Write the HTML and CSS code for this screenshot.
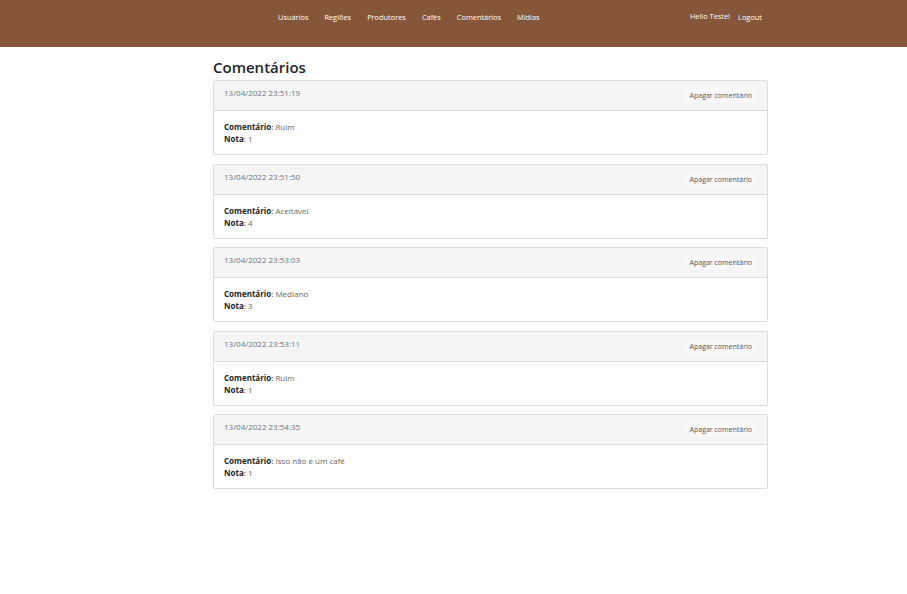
FILE: index.html
```html
<!DOCTYPE html>
<html lang="pt-BR">
<head>
<meta charset="utf-8">
<title>Comentários</title>
<link rel="stylesheet" href="styles.css">
</head>
<body>
<header class="topbar">
  <div class="topbar-inner">
    <nav class="nav-links">
      <a href="#">Usuários</a>
      <a href="#">Regiões</a>
      <a href="#">Produtores</a>
      <a href="#">Cafés</a>
      <a href="#">Comentários</a>
      <a href="#">Mídias</a>
    </nav>
    <div class="user-area">
      <span class="hello">Hello Teste!</span>
      <a href="#" class="logout">Logout</a>
    </div>
  </div>
</header>
<main class="container">
  <h2 class="page-title">Comentários</h2>

  <div class="card">
    <div class="card-header"><span class="date">13/04/2022 23:51:19</span><button class="btn-del">Apagar comentário</button></div>
    <div class="card-body"><div><b>Comentário</b>: <span class="val">Ruim</span></div><div><b>Nota</b>: <span class="val">1</span></div></div>
  </div>

  <div class="card">
    <div class="card-header"><span class="date">13/04/2022 23:51:50</span><button class="btn-del">Apagar comentário</button></div>
    <div class="card-body"><div><b>Comentário</b>: <span class="val">Aceitável</span></div><div><b>Nota</b>: <span class="val">4</span></div></div>
  </div>

  <div class="card">
    <div class="card-header"><span class="date">13/04/2022 23:53:03</span><button class="btn-del">Apagar comentário</button></div>
    <div class="card-body"><div><b>Comentário</b>: <span class="val">Mediano</span></div><div><b>Nota</b>: <span class="val">3</span></div></div>
  </div>

  <div class="card">
    <div class="card-header"><span class="date">13/04/2022 23:53:11</span><button class="btn-del">Apagar comentário</button></div>
    <div class="card-body"><div><b>Comentário</b>: <span class="val">Ruim</span></div><div><b>Nota</b>: <span class="val">1</span></div></div>
  </div>

  <div class="card">
    <div class="card-header"><span class="date">13/04/2022 23:54:35</span><button class="btn-del">Apagar comentário</button></div>
    <div class="card-body"><div><b>Comentário</b>: <span class="val">Isso não é um café</span></div><div><b>Nota</b>: <span class="val">1</span></div></div>
  </div>
</main>
</body>
</html>
```

FILE: styles.css
```css
* { box-sizing: border-box; }
html, body { margin: 0; padding: 0; background: #fff; }
body {
  font-family: "Open Sans", "Noto Sans", sans-serif;
  font-size: 8px;
  line-height: 12px;
  color: #212529;
}
.topbar {
  background: #85563a;
  height: 47px;
}
.topbar-inner {
  width: 555px;
  margin-left: 213px;
  display: flex;
  justify-content: space-between;
  padding: 11px 6px 0 65px;
}
.nav-links { display: flex; gap: 16px; }
.nav-links a, .logout, .hello {
  color: #fff;
  text-decoration: none;
  font-size: 7.4px;
  font-weight: 500;
}
.user-area { display: flex; gap: 8px; }
.hello { position: relative; top: -1px; }
.container {
  width: 555px;
  margin-left: 213px;
}
.page-title {
  margin: 9px 0 2px 0;
  font-size: 15px;
  line-height: 22px;
  font-weight: 600;
  color: #212529;
}
.card {
  border: 1px solid #dcdcdc;
  border-radius: 2px;
  margin-bottom: 8.5px;
  background: #fff;
}
.card-header {
  background: #f5f5f5;
  border-bottom: 1px solid #dcdcdc;
  height: 30px;
  display: flex;
  justify-content: space-between;
  align-items: flex-start;
  padding: 6px 10px 0 10px;
}
.date { color: #6c757d; }
.btn-del {
  margin-top: 1px;
  font-family: inherit;
  font-size: 7px;
  line-height: 11px;
  color: #555;
  background: #f8f8f9;
  border: none;
  border-radius: 2px;
  padding: 2px 5px;
}
.card-body {
  padding: 10px 10px 9px 10px;
  height: 43px;
}
.card-body b { font-weight: 700; color: #212529; }
.val { color: #666; }
```
